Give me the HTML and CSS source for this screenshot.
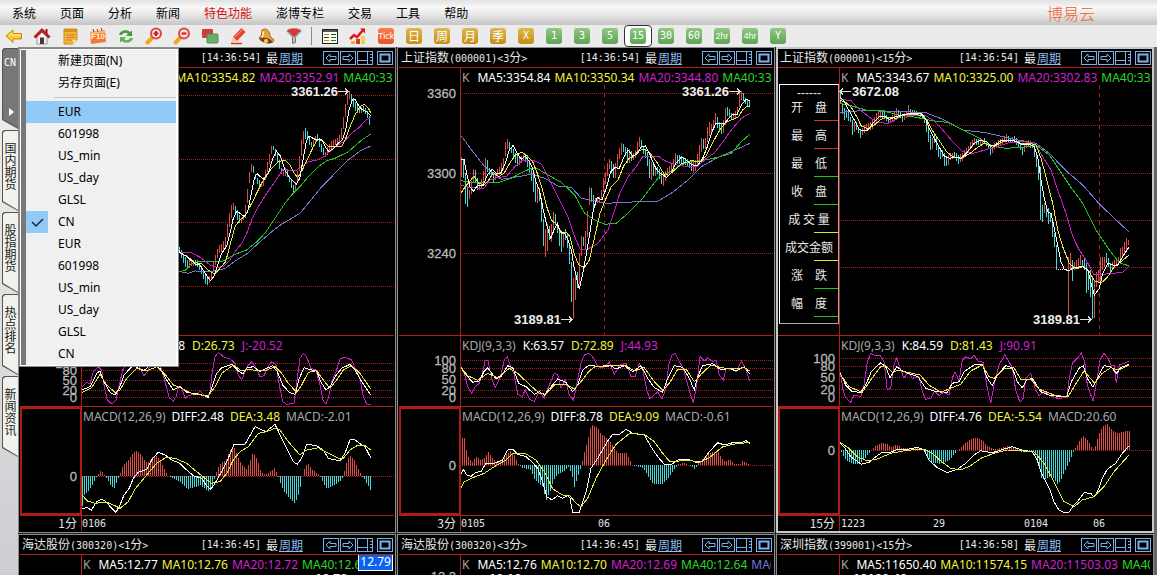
FILE: index.html
```
<!DOCTYPE html>
<html lang="zh-CN">
<head>
  <meta charset="UTF-8">
  <title>博易云</title>
  <link rel="stylesheet" href="styles.css">
</head>
<body>
  <nav class="menubar">
    <a href="#">系统</a>
    <a href="#">页面</a>
    <a href="#">分析</a>
    <a href="#">新闻</a>
    <a href="#" class="hot">特色功能</a>
    <a href="#">澎博专栏</a>
    <a href="#">交易</a>
    <a href="#">工具</a>
    <a href="#">帮助</a>
    <span class="brand">博易云</span>
  </nav>

  <div class="toolbar">
    <button aria-label="后退"><svg width="18" height="18" viewBox="0 0 18 18"><path d="M1 9l7-6v3.500h8.500v5.500h-8.500v3.500z" fill="#ffc832" stroke="#c98a12"/><path d="M4 9l3-3v2h8" fill="none" stroke="#fff0a0"/></svg></button>
    <button aria-label="首页"><svg width="18" height="18" viewBox="0 0 18 18"><path d="M4 9v8h10v-8l-5-5z" fill="#f2f2f2" stroke="#999"/><path d="M12.500 2h2v5h-2z" fill="#7a1a1a"/><path d="M0.500 9.500l8.500-8.500 8.500 8.500-2 2-6.500-6-6.500 6z" fill="#b52027"/><path d="M7 10.500h4v6.500h-4z" fill="#5a3030"/></svg></button>
    <button aria-label="记事"><svg width="18" height="18" viewBox="0 0 18 18"><path d="M3 2h13v11l-4 4h-9z" fill="#f0b444" stroke="#d08c20"/><path d="M3 2h13v3h-13z" fill="#d8921c"/><path d="M5 8h9M5 10.500h9M5 13h6" stroke="#c98520"/><path d="M12 17v-4h4z" fill="#ffe0a0"/></svg></button>
    <button class="f10" aria-label="F10"><svg width="18" height="18" viewBox="0 0 18 18"><path d="M1 5l15-2 1 12-15 2z" fill="#f37a34"/><path d="M1 5l15-2 0 3-15 2z" fill="#f9b26c"/><path d="M4 2l1 3M8 2l1 3M12 1l1 3" stroke="#8a4a2a"/></svg><span>F10</span></button>
    <button aria-label="刷新"><svg width="18" height="18" viewBox="0 0 18 18"><path d="M2 8c1-5 8-6 11-3l2-1.500v5.500h-6l2-2c-2-2-5-1.500-6 1z" fill="#4a9a3c"/><path d="M16 11c-1 5-8 6-11 3l-2 1.500v-5.500h6l-2 2c2 2 5 1.500 6-1z" fill="#5fb04e"/></svg></button>
    <button aria-label="放大"><svg width="18" height="18" viewBox="0 0 18 18"><path d="M2.500 15.500l4.500-4.500" stroke="#f0a81c" stroke-width="4" stroke-linecap="round"/><circle cx="11" cy="6.500" r="5" fill="#fbdede" stroke="#e04844" stroke-width="2"/><path d="M8.500 6.500h5M11 4v5" stroke="#c81818" stroke-width="2"/></svg></button>
    <button aria-label="缩小"><svg width="18" height="18" viewBox="0 0 18 18"><path d="M2.500 15.500l4.500-4.500" stroke="#f0a81c" stroke-width="4" stroke-linecap="round"/><circle cx="11" cy="6.500" r="5" fill="#fbdede" stroke="#e04844" stroke-width="2"/><path d="M8.500 6.500h5" stroke="#c81818" stroke-width="2"/></svg></button>
    <button aria-label="叠加"><svg width="18" height="18" viewBox="0 0 18 18"><rect x="1" y="2" width="11" height="9" rx="1" fill="#d43c3c"/><rect x="6" y="7" width="11" height="9" rx="1" fill="#6cae68" stroke="#4f8f50"/></svg></button>
    <button aria-label="画线"><svg width="18" height="18" viewBox="0 0 18 18"><path d="M4 10l8.500-9 4 4-8.500 9z" fill="#e8402c"/><path d="M6 10.500l8-8.500" stroke="#ff9a80"/><path d="M4 10l4 4-6 1.500z" fill="#f6c890"/><path d="M2 16.500h11" stroke="#e0301c" stroke-width="1.500"/></svg></button>
    <button aria-label="预警"><svg width="18" height="18" viewBox="0 0 18 18"><path d="M5 3c5-3 8 2 8 6l4 4-1.500 2.500-13-3.500c-1-2 1-2 2-4z" fill="#e6a23c" stroke="#a8641c"/><ellipse cx="9" cy="13.500" rx="6.500" ry="2.500" transform="rotate(15 9 13.500)" fill="#7a4418"/><circle cx="9" cy="14" r="2" fill="#ffd060"/><path d="M6 4.500c1 2 0 4-1 6" stroke="#fff0b0" fill="none" stroke-width="1.500"/></svg></button>
    <button aria-label="筛选"><svg width="18" height="18" viewBox="0 0 18 18"><path d="M2 4l5.500 6v6.500l3-1v-5.500l5.500-6z" fill="#b8bcc0" stroke="#777"/><ellipse cx="9" cy="4" rx="7" ry="2.500" fill="#e83030" stroke="#999"/><path d="M5 6l4 4 4-4z" fill="#d83030"/></svg></button>
    <i class="sep"></i>
    <button aria-label="报价表"><svg width="18" height="18" viewBox="0 0 18 18"><rect x="1.500" y="2.500" width="15" height="14" fill="#fffff0" stroke="#222"/><path d="M2 4h14" stroke="#555" stroke-width="2"/><path d="M3 7.500h5M3 13.500h5" stroke="#b08820"/><path d="M10 7.500h5M3 10.500h5" stroke="#333"/><path d="M10 10.500h5M10 13.500h5" stroke="#287828"/></svg></button>
    <button aria-label="走势"><svg width="18" height="18" viewBox="0 0 18 18"><path d="M1 12l4-4 3 2 7-8" stroke="#e01820" stroke-width="2.500" fill="none"/><path d="M11 1.500h5v5z" fill="#e01820"/><path d="M2 14h4v3h-4z" fill="#e8b030"/><path d="M7 12h4v5h-4z" fill="#d04020"/><path d="M12 9h4v8h-4z" fill="#f0d050"/></svg></button>
    <button><b class="badge tick">Tick</b></button>
    <button><b class="badge day">日</b></button>
    <button><b class="badge day">周</b></button>
    <button><b class="badge day">月</b></button>
    <button><b class="badge day">季</b></button>
    <button><b class="badge day num">X</b></button>
    <button><b class="badge num">1</b></button>
    <button><b class="badge num">3</b></button>
    <button><b class="badge num">5</b></button>
    <button class="on"><b class="badge num">15</b></button>
    <button><b class="badge num">30</b></button>
    <button><b class="badge num">60</b></button>
    <button><b class="badge hr">2hr</b></button>
    <button><b class="badge hr">4hr</b></button>
    <button><b class="badge num">Y</b></button>
  </div>

  <div class="main">
    <div class="tabs">
      <button class="tab active"><b>CN</b><i></i></button>
      <button class="tab"><span>国内期货</span></button>
      <button class="tab"><span>股指期货</span></button>
      <button class="tab"><span>热点排名</span></button>
      <button class="tab"><span>新闻资讯</span></button>
    </div>

    <div class="board">
      <section class="panel">
        <header class="title">
          <span class="time">[14:36:54]</span><b>最</b><a href="#">周期</a>
          <div class="tools"></div>
        </header>
        <div class="pane price">
          <div class="legend"><span class="gray">K</span><span class="k">MA5:3355.42</span><span class="y">MA10:3354.82</span><span class="m">MA20:3352.91</span><span class="g">MA40:3346.15</span></div>
          <svg data-chart="p1"></svg>
        </div>
        <div class="pane kdj">
          <div class="legend"><span class="gray">KDJ(9,3,3)</span><span class="w">K:10.98</span><span class="y">D:26.73</span><span class="m">J:-20.52</span></div>
          <svg data-chart="k1"></svg>
        </div>
        <div class="pane macd">
          <div class="legend"><span class="gray">MACD(12,26,9)</span><span class="w">DIFF:2.48</span><span class="y">DEA:3.48</span><span class="gray">MACD:-2.01</span></div>
          <svg data-chart="m1"></svg>
        </div>
        <div class="pane dates"><svg data-chart="t1"></svg></div>
      </section>

      <section class="panel">
        <header class="title">
          <span class="name"><b>上证指数</b>(000001)&lt;3<b>分</b>&gt;</span>
          <span class="time">[14:36:54]</span><b>最</b><a href="#">周期</a>
          <div class="tools"></div>
        </header>
        <div class="pane price">
          <div class="legend"><span class="gray">K</span><span class="k">MA5:3354.84</span><span class="y">MA10:3350.34</span><span class="m">MA20:3344.80</span><span class="g">MA40:3334.12</span></div>
          <svg data-chart="p2"></svg>
        </div>
        <div class="pane kdj">
          <div class="legend"><span class="gray">KDJ(9,3,3)</span><span class="w">K:63.57</span><span class="y">D:72.89</span><span class="m">J:44.93</span></div>
          <svg data-chart="k2"></svg>
        </div>
        <div class="pane macd">
          <div class="legend"><span class="gray">MACD(12,26,9)</span><span class="w">DIFF:8.78</span><span class="y">DEA:9.09</span><span class="gray">MACD:-0.61</span></div>
          <svg data-chart="m2"></svg>
        </div>
        <div class="pane dates"><svg data-chart="t2"></svg></div>
      </section>

      <section class="panel selected">
        <header class="title">
          <span class="name"><b>上证指数</b>(000001)&lt;15<b>分</b>&gt;</span>
          <span class="time">[14:36:54]</span><b>最</b><a href="#">周期</a>
          <div class="tools"></div>
        </header>
        <div class="pane price">
          <div class="legend"><span class="gray">K</span><span class="k">MA5:3343.67</span><span class="y">MA10:3325.00</span><span class="m">MA20:3302.83</span><span class="g">MA40:3306.41</span></div>
          <svg data-chart="p3"></svg>
          <div class="quote">
            <p class="dash">------</p>
            <p class="up">开　盘</p>
            <p class="up">最　高</p>
            <p class="down">最　低</p>
            <p class="down">收　盘</p>
            <p class="vol">成 交 量</p>
            <p class="vol">成交金额</p>
            <p class="down">涨　跌</p>
            <p class="down">幅　度</p>
          </div>
        </div>
        <div class="pane kdj">
          <div class="legend"><span class="gray">KDJ(9,3,3)</span><span class="w">K:84.59</span><span class="y">D:81.43</span><span class="m">J:90.91</span></div>
          <svg data-chart="k3"></svg>
        </div>
        <div class="pane macd">
          <div class="legend"><span class="gray">MACD(12,26,9)</span><span class="w">DIFF:4.76</span><span class="y">DEA:-5.54</span><span class="gray">MACD:20.60</span></div>
          <svg data-chart="m3"></svg>
        </div>
        <div class="pane dates"><svg data-chart="t3"></svg></div>
      </section>

      <section class="panel">
        <header class="title">
          <span class="name"><b>海达股份</b>(300320)&lt;1<b>分</b>&gt;</span>
          <span class="time">[14:36:45]</span><b>最</b><a href="#">周期</a>
          <div class="tools"></div>
        </header>
        <div class="pane price">
          <div class="legend"><span class="gray">K</span><span class="k">MA5:12.77</span><span class="y">MA10:12.76</span><span class="m">MA20:12.72</span><span class="g">MA40:12.68</span></div>
          <svg data-chart="b1"></svg>
          <span class="last">12.79</span>
        </div>
      </section>

      <section class="panel">
        <header class="title">
          <span class="name"><b>海达股份</b>(300320)&lt;3<b>分</b>&gt;</span>
          <span class="time">[14:36:45]</span><b>最</b><a href="#">周期</a>
          <div class="tools"></div>
        </header>
        <div class="pane price">
          <div class="legend"><span class="gray">K</span><span class="k">MA5:12.76</span><span class="y">MA10:12.70</span><span class="m">MA20:12.69</span><span class="g">MA40:12.64</span><span class="b">MA60:12.61</span></div>
          <svg data-chart="b2"></svg>
        </div>
      </section>

      <section class="panel">
        <header class="title">
          <span class="name"><b>深圳指数</b>(399001)&lt;15<b>分</b>&gt;</span>
          <span class="time">[14:36:58]</span><b>最</b><a href="#">周期</a>
          <div class="tools"></div>
        </header>
        <div class="pane price">
          <div class="legend"><span class="gray">K</span><span class="k">MA5:11650.40</span><span class="y">MA10:11574.15</span><span class="m">MA20:11503.03</span><span class="g">MA40:11498.20</span></div>
          <svg data-chart="b3"></svg>
        </div>
      </section>
    </div>

    <div class="popup">
      <button>新建页面(N)</button>
      <button>另存页面(E)</button>
      <hr>
      <button class="hover">EUR</button>
      <button>601998</button>
      <button>US_min</button>
      <button>US_day</button>
      <button>GLSL</button>
      <button class="checked"><svg width="22" height="22" viewBox="0 0 22 22"><path d="M6 11l4 4 7-7" fill="none" stroke="#223" stroke-width="1.500"/></svg>CN</button>
      <button>EUR</button>
      <button>601998</button>
      <button>US_min</button>
      <button>US_day</button>
      <button>GLSL</button>
      <button>CN</button>
    </div>
  </div>

  <script src="charts.js"></script>
</body>
</html>
```
FILE: styles.css
```
* {
  box-sizing: border-box;
}

body {
  margin: 0;
  height: 100vh;
  overflow: hidden;
  display: flex;
  flex-direction: column;
  background: #ebebeb;
  font-family: 'Noto Sans CJK SC', sans-serif;
  font-size: 12px;
}

button {
  border: none;
  padding: 0;
  margin: 0;
  background: none;
  font: inherit;
  color: inherit;
}

/* menu bar */
.menubar {
  flex: none;
  height: 25px;
  display: flex;
  align-items: center;
  gap: 24px;
  padding: 0 62px 0 12px;
  background: linear-gradient(#e2e2e2, #f8f8f8 30%, #e6e6e6 60%, #c6c4c4);
}

.menubar a {
  color: #000;
  text-decoration: none;
}

.menubar .hot {
  color: #d01010;
}

.brand {
  margin-left: auto;
  font-size: 16px;
  font-weight: 300;
  color: #f0602c;
}

/* toolbar */
.toolbar {
  flex: none;
  height: 22px;
  display: flex;
  background: #ebebeb;
}

.toolbar button {
  position: relative;
  width: 28px;
  height: 22px;
  display: flex;
  align-items: center;
  justify-content: center;
}

.toolbar .sep {
  width: 1px;
  height: 18px;
  margin: 2px 4px 2px 3px;
  background: #888;
}

.toolbar .on {
  border: 1px solid #333;
  border-radius: 4px;
  background: #fff;
}

.f10 span {
  position: absolute;
  left: 0;
  right: 0;
  top: 7px;
  font: bold 8px/10px 'Liberation Sans', sans-serif;
  color: #fff4d0;
}

.badge {
  width: 16px;
  height: 16px;
  border-radius: 3px;
  background: linear-gradient(#90c884, #5fa352);
  color: #fff;
  font-weight: normal;
  line-height: 16px;
  text-align: center;
  white-space: nowrap;
}

.badge.day {
  background: linear-gradient(#e0b850, #c48c14);
}

.badge.num {
  font-family: 'DejaVu Sans Mono', monospace;
  font-size: 10px;
}

.badge.hr {
  font-family: 'Liberation Sans', sans-serif;
  font-size: 9px;
}

.badge.tick {
  background: linear-gradient(#f88050, #e85020);
  font-family: 'Liberation Sans', sans-serif;
  font-size: 9px;
}

/* page tabs */
.main {
  position: relative;
  flex: 1;
  display: flex;
  min-height: 0;
}

.tabs {
  flex: none;
  width: 18px;
  padding: 1px 0 0 2px;
  background: linear-gradient(#efefef, #dcdcde 60%, #cdcdd2);
}

.tab {
  position: relative;
  display: block;
  width: 16px;
  height: 81px;
  margin-bottom: 1px;
  background: #555;
  clip-path: polygon(0 2px, 2px 0, 100% 0, 100% 100%, 0 calc(100% - 9px));
  line-height: 15px;
}

.tab::before {
  content: '';
  position: absolute;
  inset: 1px 0 1px 1px;
  background: #f2f1ec;
  clip-path: polygon(0 2px, 2px 0, 100% 0, 100% 100%, 0 calc(100% - 9px));
}

.tab.active::before {
  background: #777;
}

.tab span {
  position: absolute;
  top: 12px;
  left: 1px;
  writing-mode: vertical-rl;
  color: #222;
}

.tab b {
  position: absolute;
  top: 7px;
  left: 2px;
  color: #fff;
  font: 10px/15px 'DejaVu Sans Mono', monospace;
}

.tab i {
  position: absolute;
  left: 7px;
  top: 60px;
  border: 4px solid transparent;
  border-left: 5px solid #fff;
  border-right: none;
}

/* chart windows */
.board {
  flex: 1;
  min-width: 0;
  overflow: hidden;
  display: grid;
  grid-template-columns: repeat(3, minmax(0, 1fr));
  grid-auto-rows: max-content;
  align-content: start;
  gap: 1px;
  background: #222;
  border-right: 3px solid #666;
}

.panel {
  border: 1px solid #8c8c8c;
  padding: 1px;
  background: #000;
  overflow: hidden;
}

.panel.selected {
  border: 2px solid #c8c8c8;
  padding: 0;
}

.title {
  display: flex;
  align-items: center;
  justify-content: flex-end;
  height: 19px;
  padding: 0 1px 0 2px;
  border-bottom: 1px solid #b02019;
  color: #e8e8e8;
  font-family: 'DejaVu Sans Mono', monospace;
  font-size: 10px;
  line-height: 18px;
  white-space: nowrap;
}

.title b,
.title a {
  font-family: 'Noto Sans CJK SC', sans-serif;
  font-size: 12px;
  font-weight: normal;
}

.title .name {
  margin-right: auto;
}

.title .time {
  margin-right: 5px;
}

.title a {
  margin: 0 20px 0 1px;
  color: #8cbcf4;
}

.tools {
  display: flex;
  gap: 1px;
}

.tools button {
  height: 14px;
}

.tools button:last-child {
  margin-left: 3px;
}

.tools svg {
  display: block;
}

.pane {
  position: relative;
  overflow: hidden;
  border-bottom: 1px solid #b02019;
}

.pane svg {
  display: block;
  width: 100%;
  height: 100%;
}

.price {
  height: 268px;
}

.kdj {
  height: 71px;
}

.macd {
  height: 109px;
}

.dates {
  height: 15px;
  border-bottom: none;
}

.legend {
  position: absolute;
  top: 2px;
  left: 63px;
  right: 2px;
  display: flex;
  gap: 4px;
  overflow: hidden;
  font-family: 'Noto Sans', sans-serif;
  font-size: 12px;
  line-height: 15px;
  white-space: nowrap;
}

.legend .k {
  margin-left: 4px;
  color: #fff;
}

.kdj .legend {
  gap: 7px;
}

.macd .legend {
  gap: 6px;
}

.gray { color: #a8a8a8; }
.w { color: #fff; }
.y { color: #f4f43c; }
.m { color: #d020d0; }
.g { color: #28d828; }
.b { color: #7878d8; }

.quote {
  position: absolute;
  top: 16px;
  left: 1px;
  width: 60px;
  height: 240px;
  border: 1px solid #aaa;
  border-top-color: #fff;
  border-left-color: #fff;
  background: #000;
  color: #e8e8e8;
  text-align: center;
  overflow: hidden;
}

.quote p {
  position: relative;
  height: 28px;
  margin: 0;
  line-height: 16px;
  white-space: nowrap;
}

.quote .dash {
  height: 14px;
  font-family: 'Liberation Sans', sans-serif;
  font-size: 12px;
}

.quote p::after {
  content: '';
  position: absolute;
  right: 0;
  top: 21px;
  width: 24px;
  border-top: 1px solid;
}

.quote .dash::after { display: none; }
.quote .up::after { color: #d83030; }
.quote .down::after { color: #20c820; }
.quote .vol::after { color: #e0e020; }

.last {
  position: absolute;
  right: 1px;
  top: -2px;
  padding: 0 1px;
  border: 1px solid #fff;
  background: #0a62f0;
  color: #fff;
  font-family: 'Noto Sans', sans-serif;
  font-size: 12px;
  line-height: 16px;
}

/* chart drawing */
.pane line,
.pane path,
.pane rect {
  fill: none;
  stroke-width: 1;
  shape-rendering: crispEdges;
}

.axis { stroke: #b02019; }
.grid { stroke: #b01c1c; stroke-dasharray: 1 1; }
.day-line { stroke: #b02019; stroke-dasharray: 4 4; }
.pane .focus { stroke: #b01c14; stroke-width: 2; }
.rise { stroke: #e04c44; }
.fall { stroke: #40dcdc; }
.ma5 { stroke: #fff; }
.ma10 { stroke: #e8e838; }
.ma20 { stroke: #c81ec8; }
.ma40 { stroke: #20c420; }
.ma60 { stroke: #7078d0; }
.pointer { stroke: #ddd; }

.pane text {
  font-family: 'Liberation Sans', sans-serif;
  font-size: 13px;
}

.scale { fill: #b8b8b8; stroke: #b8b8b8; stroke-width: 0.3px; text-anchor: end; }
.mark { fill: #eee; font-weight: bold; }

.pane .date {
  fill: #e4e4e4;
  font-family: 'DejaVu Sans Mono', 'Noto Sans CJK SC', monospace;
  font-size: 10px;
}

.pane .unit {
  fill: #e4e4e4;
  font-family: 'Noto Sans CJK SC', sans-serif;
  font-size: 12px;
  text-anchor: end;
}

/* page menu */
.popup {
  position: absolute;
  left: 19px;
  top: 1px;
  width: 160px;
  display: flex;
  flex-direction: column;
  padding-left: 5px;
  border: 2px solid #fff;
  border-right-width: 3px;
  outline: 1px solid #888;
  outline-offset: -1px;
  background: linear-gradient(90deg, #787878 5px, #f0f0f0 5px);
  font-family: 'Noto Sans', 'Noto Sans CJK SC', sans-serif;
}

.popup button {
  position: relative;
  height: 22px;
  padding-left: 32px;
  line-height: 22px;
  text-align: left;
  color: #000;
}

.popup .hover {
  background: #91c9f7;
}

.popup .checked svg {
  position: absolute;
  left: 0;
  top: 0;
  background: #91c9f7;
}

.popup hr {
  width: 122px;
  height: 1px;
  margin: 3px 0 3px auto;
  border: none;
  background: #c8c8c8;
}
```
FILE: charts.js
```
// Points are stored as "x,y x,y ..." in thirds of a pixel, dx/dy move them into the pane.
const charts = {
  p1: {
    type: 'price', dx: 155, dy: 2,
    grid: [27, 91, 154, 218],
    candles: '12,530,548 22,548,575 30,562,590 38,572,596 48,570,588 58,570,588 66,570,590 76,585,605 84,600,628 92,618,645 98,628,644 108,605,630 116,568,598 124,540,570 132,525,548 140,522,545 150,500,535 158,450,490 166,408,450 174,400,420 182,410,440 190,430,460 198,445,460 204,435,450 212,393,440 218,340,380 224,290,320 230,280,300 236,292,315 242,320,335 250,330,350 258,335,352 266,318,345 272,290,322 280,260,292 286,232,262 292,222,236 298,236,252 306,245,275 314,280,304 320,300,318 328,298,318 334,290,315 342,318,335 350,335,360 356,350,370 362,328,360 368,290,325 374,240,290 380,195,240 388,172,205 396,182,208 404,208,230 410,218,232 418,200,222 426,193,212 432,205,232 440,228,250 450,245,262 458,228,252 466,215,240 476,210,225 486,205,228 494,192,215 500,165,205 506,130,165 512,90,130 518,62,92 524,62,84 532,80,108 540,95,122 548,108,130 556,110,130 564,108,125 572,115,135 578,125,150 584,145,172',
    lines: {
      ma60: '12,604 40,610 60,603 110,604 150,596 185,570 215,552 250,520 290,485 320,462 345,448 375,430 400,400 440,350 480,310 520,270 560,240 587,228',
      ma40: '12,604 30,602 50,580 70,575 100,573 145,573 180,553 215,540 245,515 270,490 300,445 330,400 350,375 375,350 400,320 430,290 455,272 480,265 520,245 560,210 587,192',
      ma20: '12,547 48,547 80,565 105,585 125,592 145,590 165,570 180,545 200,520 215,490 230,450 250,410 275,370 300,335 325,297 340,300 365,300 380,290 400,275 425,270 450,258 480,230 510,212 530,190 555,170 570,152 587,143',
      ma10: '12,548 35,558 60,578 80,582 100,600 118,612 135,595 152,575 165,525 180,470 195,450 210,438 230,400 250,360 270,320 290,295 310,275 330,270 345,285 358,310 368,323 382,300 400,262 415,230 428,208 445,214 460,228 480,231 500,230 512,205 525,170 540,135 555,110 568,103 580,115 587,128',
      ma5: '12,545 38,562 60,582 75,585 92,612 106,632 116,620 130,580 140,550 155,528 165,490 175,445 186,424 195,430 208,440 218,425 228,375 238,325 246,311 256,320 268,328 280,310 292,270 304,243 316,258 330,300 345,325 364,342 374,325 384,270 394,215 402,198 420,208 440,208 452,232 462,245 476,235 490,220 502,210 512,180 522,120 532,90 540,88 550,105 560,118 575,125 587,138'
    },
    marks: [['3361.26', 348, 62, 490, 520]]
  },
  p2: {
    type: 'price', dx: -1, dy: 2,
    grid: [25, 105, 185],
    scale: [['3360', 25], ['3300', 105], ['3240', 185]],
    day: 205,
    candles: '190,260,320 194,258,290 200,290,395 206,350,420 212,365,390 218,350,385 224,300,345 230,290,330 236,320,360 244,335,360 254,320,350 260,265,345 266,260,300 272,290,315 280,300,320 288,315,342 296,300,320 304,290,315 310,280,312 316,265,300 320,222,270 326,204,238 332,210,235 340,230,250 348,240,270 356,255,290 364,260,285 372,258,275 380,252,272 388,255,290 394,270,310 402,300,340 410,330,390 416,350,412 422,345,375 428,370,430 434,430,510 440,485,560 446,462,560 452,462,505 458,480,522 464,428,500 470,425,460 476,450,475 482,470,520 488,485,548 494,490,545 500,475,500 506,480,530 512,510,545 518,540,660 523,630,748 529,620,740 535,600,640 541,610,665 546,510,625 552,490,525 558,505,530 564,470,540 570,400,480 574,350,405 578,348,385 584,370,415 590,385,410 598,380,400 606,380,400 612,350,380 618,310,360 624,305,335 630,265,310 636,268,290 642,275,320 650,290,330 656,260,310 662,240,270 668,220,262 674,218,245 680,230,250 690,235,285 698,240,275 706,250,270 714,235,260 720,208,245 726,198,225 732,215,240 738,235,260 746,240,270 752,260,320 758,280,335 764,270,318 770,290,318 778,290,312 786,300,330 794,310,352 800,305,338 808,295,320 816,285,312 824,272,300 832,250,285 840,255,280 850,258,285 860,262,285 870,270,290 878,275,300 886,275,310 894,270,300 902,235,280 908,205,250 914,203,235 920,215,245 926,180,222 932,152,200 938,165,190 944,158,180 952,130,165 958,140,175 966,160,190 974,165,192 980,118,180 986,108,135 994,118,145 1002,132,150 1010,126,148 1018,110,135 1024,70,112 1030,62,90 1036,70,92 1042,84,102 1048,88,108 1054,90,108',
    lines: {
      ma60: '190,198 225,245 260,290 310,328 350,322 400,313 440,325 480,348 520,352 550,385 590,393 625,400 680,397 780,393 820,370 870,330 910,290 960,262 1000,245 1056,220',
      ma40: '190,332 225,338 300,338 340,325 370,308 400,295 420,297 450,315 490,337 530,375 560,430 590,450 620,463 655,460 690,430 730,390 760,350 785,318 810,308 840,290 870,275 910,272 960,262 1000,250 1030,215 1056,192',
      ma20: '190,345 215,353 258,355 275,330 300,322 325,320 350,290 372,272 405,271 430,282 450,320 480,380 510,440 530,500 546,538 568,538 600,520 630,480 650,420 665,370 690,320 715,290 735,258 760,258 780,258 800,272 830,284 870,290 900,288 925,265 950,248 975,215 1000,180 1030,145 1056,130',
      ma10: '190,368 205,345 215,335 228,318 242,340 258,345 272,330 286,308 302,320 318,310 335,280 352,255 372,246 388,258 404,275 418,310 432,355 446,410 460,450 474,462 490,490 506,488 516,500 528,550 542,585 560,592 574,570 590,500 606,430 622,390 640,350 660,330 676,290 692,266 706,260 722,242 736,238 750,242 766,262 780,282 798,312 812,316 830,300 850,282 880,272 910,275 926,255 944,218 962,185 982,158 1000,150 1020,142 1034,120 1045,110 1056,110',
      ma5: '190,268 198,268 206,310 216,350 226,364 240,345 255,348 268,315 282,298 295,310 308,310 322,280 334,240 346,226 358,250 370,268 382,258 394,275 404,295 414,335 424,360 436,420 446,465 458,505 468,480 478,462 488,485 500,490 512,515 520,540 528,590 536,625 544,658 552,620 562,570 574,500 586,420 598,382 612,390 626,350 638,305 650,293 664,295 678,260 690,240 704,258 718,252 730,230 742,228 754,250 764,275 776,300 790,312 806,322 820,308 834,280 850,262 862,268 874,278 886,286 900,285 914,265 928,230 942,185 954,160 968,162 980,160 992,145 1006,132 1018,132 1030,105 1044,88 1056,92'
    },
    marks: [['3361.26', 852, 62, 992, 1027], ['3189.81', 348, 748, 490, 522]]
  },
  p3: {
    type: 'price', dx: -2, dy: 2,
    grid: [57, 105, 152, 199],
    day: 321,
    gap: [845, 869],
    candles: '191,60,100 197,100,132 203,115,150 209,120,145 215,125,152 221,140,155 227,150,195 233,155,185 239,155,180 245,170,190 251,178,205 257,175,195 263,165,188 275,160,180 287,150,178 299,130,155 311,122,145 323,125,145 335,145,160 347,135,155 359,115,145 371,125,145 377,135,155 389,125,145 395,105,128 401,118,135 413,120,135 425,125,135 437,132,148 443,135,160 449,155,185 455,175,215 461,195,240 467,205,238 473,195,220 479,205,240 485,225,262 491,235,268 497,240,262 503,250,287 509,258,288 515,255,285 521,250,270 533,245,265 545,255,282 557,250,272 563,240,262 575,228,250 581,215,235 593,205,225 605,208,225 617,210,222 623,205,220 635,220,235 641,232,255 647,235,250 653,220,238 665,210,232 677,205,222 689,192,212 701,205,220 713,198,210 719,205,225 731,222,240 737,230,255 749,222,235 755,210,230 767,215,235 773,235,260 779,250,292 785,280,330 791,290,450 797,405,455 803,400,428 809,405,440 815,415,462 821,430,455 827,450,500 833,490,530 839,525,600 869,600,745 875,560,745 881,550,600 887,570,632 893,575,600 905,565,595 911,555,585 917,570,590 923,560,600 929,580,668 935,600,660 941,600,680 947,620,748 953,630,745 959,605,650 965,600,640 971,562,640 977,560,600 983,560,590 989,550,580 995,565,590 1001,580,605 1013,570,595 1025,560,580 1031,535,575 1037,530,560 1043,515,550 1049,505,540 1055,510,525',
    lines: {
      ma60: '191,127 270,121 380,125 450,128 500,148 560,180 630,188 700,205 780,220 820,250 870,302 920,345 970,402 1010,440 1058,485',
      ma40: '191,100 225,107 270,120 330,125 370,135 420,142 470,152 520,158 560,180 610,205 650,228 690,235 740,232 780,225 820,255 850,300 880,345 920,400 960,480 1000,540 1030,578 1058,587',
      ma20: '191,87 225,92 255,122 285,145 310,158 335,160 355,152 380,135 445,135 470,150 500,180 530,215 560,245 590,250 620,242 660,230 700,218 740,215 775,218 800,260 825,300 845,360 870,430 890,500 910,540 930,570 955,615 990,612 1040,607 1058,588',
      ma10: '191,90 210,98 225,110 242,140 256,168 275,176 295,165 315,148 335,142 360,145 375,138 400,132 435,136 452,150 468,180 490,212 512,245 530,260 555,265 580,252 605,232 625,220 650,232 680,215 710,210 735,220 760,220 780,225 795,265 810,320 830,400 845,480 860,530 880,580 900,597 920,590 940,605 955,632 975,640 995,620 1015,590 1035,575 1058,556',
      ma5: '191,80 205,95 218,120 235,150 250,178 262,182 275,180 295,155 310,140 325,138 340,148 360,140 385,133 410,130 435,130 448,145 460,175 475,205 490,232 505,258 520,265 540,262 555,265 575,245 595,220 612,212 630,214 645,228 658,225 675,212 700,210 720,214 740,225 760,222 775,230 785,260 795,330 805,385 815,425 825,430 835,475 845,525 855,575 865,598 878,602 890,595 905,592 920,588 935,600 945,640 955,675 970,655 980,610 995,580 1010,585 1025,585 1040,560 1058,532'
    },
    marks: [['3672.08', 229, 62, 225, 192], ['3189.81', 772, 748, 912, 945]]
  },
  k1: {
    type: 'kdj', dx: -20, dy: -1,
    scale: [['100', 27], ['80', 34], ['50', 44], ['20', 54], ['0', 61]],
    lines: {
      ma20: '246,155 260,142 270,146 280,110 295,95 305,105 312,150 322,195 335,207 348,195 358,150 368,105 380,85 400,70 420,100 432,122 445,105 460,70 480,90 495,140 508,188 520,198 528,185 536,155 545,160 555,190 565,182 580,178 590,180 600,168 612,180 622,188 630,170 637,110 645,65 655,52 670,65 690,72 705,85 715,120 725,135 735,110 745,90 755,80 768,98 780,125 792,122 804,95 815,80 828,90 838,150 848,200 860,208 882,205 892,130 900,70 910,55 920,65 932,100 948,105 960,150 970,200 978,206 985,190 995,140 1008,110 1020,72 1035,66 1055,75 1065,100 1080,130 1090,185 1100,207 1112,208',
      ma5: '246,165 270,155 290,115 300,108 312,140 330,172 345,180 358,160 372,120 400,90 430,108 455,88 480,100 500,135 520,165 540,155 560,172 600,178 625,187 638,150 650,115 665,98 695,88 712,105 728,117 742,98 760,95 780,110 800,100 818,92 832,110 848,150 868,172 885,178 898,130 912,98 935,105 950,108 962,140 978,165 990,155 1005,125 1025,100 1050,88 1065,105 1085,140 1112,180',
      ma10: '246,172 275,158 300,118 320,150 345,172 360,165 380,130 410,100 440,108 470,95 495,118 520,150 545,160 580,178 625,182 645,155 665,115 700,90 725,108 745,102 775,108 800,105 825,95 845,115 865,145 890,172 905,150 925,112 950,107 970,135 990,160 1010,135 1030,105 1055,92 1080,115 1112,162'
    }
  },
  k2: {
    type: 'kdj', dx: -3, dy: -1,
    scale: [['100', 24], ['80', 32], ['50', 43], ['20', 54], ['0', 61]],
    lines: {
      ma20: '195,95 205,115 215,155 227,175 237,155 250,145 258,120 268,75 276,78 288,135 298,157 312,130 325,75 334,66 344,95 355,120 365,178 378,185 388,165 400,192 415,200 430,168 445,190 458,155 475,115 485,120 495,160 508,135 520,180 532,196 542,150 555,85 565,60 580,55 592,68 605,95 620,98 640,82 655,118 672,90 690,85 705,125 718,125 730,85 742,110 752,165 762,192 785,170 798,192 810,160 818,90 828,60 838,55 850,80 862,100 875,150 892,205 902,150 912,65 925,78 935,68 950,80 960,75 970,120 982,135 990,100 1010,105 1022,110 1036,78 1048,100 1061,138',
      ma5: '195,98 210,120 230,142 250,138 265,108 275,98 300,132 315,125 335,92 350,98 368,145 390,155 415,178 430,170 445,180 465,155 485,132 510,142 530,170 545,150 560,105 580,90 610,95 640,90 660,102 685,92 710,110 735,92 755,130 775,158 800,172 815,130 835,92 860,97 880,130 895,165 905,125 920,92 950,86 975,105 1000,100 1020,108 1045,95 1061,118',
      ma10: '195,97 215,122 245,136 275,115 305,128 340,100 365,115 400,148 430,175 450,178 475,150 510,148 535,162 555,140 580,108 600,93 640,93 690,92 715,108 745,98 775,140 800,166 820,145 845,103 870,102 895,140 915,118 945,90 975,98 1010,102 1045,98 1061,108'
    }
  },
  k3: {
    type: 'kdj', dx: -4, dy: -1,
    scale: [['100', 22], ['80', 30], ['50', 41], ['20', 53], ['0', 61]],
    lines: {
      ma20: '199,110 207,165 215,188 230,202 240,180 260,185 270,150 280,80 290,55 305,62 318,60 330,80 340,165 350,160 360,90 368,68 378,100 390,130 402,110 415,130 435,125 445,170 455,193 470,190 482,168 495,182 508,172 525,180 535,130 543,110 555,138 565,75 575,65 590,72 600,60 612,78 628,82 638,150 650,205 662,140 675,90 692,60 705,80 715,98 725,165 738,202 748,190 755,130 770,115 785,165 795,182 810,170 825,180 850,190 878,188 886,130 895,85 910,70 922,55 932,80 940,150 957,198 968,140 978,75 990,55 1002,70 1012,92 1020,90 1027,145 1036,90 1050,85 1065,78',
      ma5: '199,115 215,150 235,170 260,172 275,150 292,110 320,83 335,95 348,128 368,95 385,108 410,118 432,125 455,160 480,168 520,172 535,145 555,140 570,110 600,90 625,88 640,130 655,152 670,120 695,92 715,98 730,140 745,158 758,135 775,130 800,170 830,182 878,185 892,140 915,100 928,92 940,130 957,157 972,125 990,92 1010,95 1028,115 1040,98 1065,88',
      ma10: '199,118 225,155 265,172 290,135 320,95 335,92 355,112 375,105 400,112 438,120 465,150 500,172 530,160 560,148 590,108 625,90 645,125 660,130 690,102 720,98 740,132 770,132 795,162 840,180 882,186 900,155 930,108 962,145 985,115 1010,98 1035,105 1065,90'
    }
  },
  m1: {
    type: 'macd', dx: -20, dy: -72, zero: 424,
    bars: '246,512 252,480 262,470 274,455 284,432 290,424 298,408 304,406 312,420 320,430 332,455 342,460 350,440 358,420 366,395 376,382 388,370 398,352 410,347 422,360 436,380 446,380 456,365 468,362 480,375 490,400 504,424 520,432 545,445 562,462 580,458 600,450 622,468 634,465 644,424 652,400 664,382 676,378 686,350 700,333 712,365 724,388 738,402 748,380 758,352 770,372 782,412 796,420 808,410 822,400 832,420 838,440 850,468 868,490 884,507 896,475 906,424 914,395 922,385 936,405 952,415 962,430 978,460 1000,452 1024,435 1030,415 1040,375 1050,362 1062,375 1074,402 1084,424 1092,432 1102,450 1112,468',
    lines: {
      ma5: '246,520 262,518 274,525 290,500 305,493 318,500 335,520 348,532 360,510 372,480 388,460 400,430 415,412 440,403 458,370 475,352 495,360 515,375 540,385 560,405 580,422 605,430 618,450 632,463 645,445 665,410 685,370 702,328 735,328 748,305 765,275 798,290 825,268 845,310 865,350 880,380 892,388 905,370 920,328 950,332 970,345 985,370 1020,378 1035,355 1050,315 1062,312 1078,325 1095,335 1112,368',
      ma10: '246,480 262,498 285,505 320,502 345,512 360,520 385,500 405,462 440,420 470,385 500,366 530,372 560,385 590,410 615,430 635,445 660,440 680,415 700,375 720,350 745,335 775,295 800,290 825,280 840,285 865,320 900,360 920,345 955,338 985,355 1015,370 1030,370 1050,345 1075,330 1095,332 1112,345'
    }
  },
  m2: {
    type: 'macd', dx: -3, dy: -72, zero: 391,
    bars: '197,310 203,310 209,345 217,372 227,380 239,365 251,375 263,368 275,350 287,368 299,380 317,375 329,358 341,348 353,360 365,388 380,400 400,402 412,430 425,445 438,455 448,497 460,470 470,438 480,420 500,410 516,395 526,420 532,458 542,430 554,392 562,355 572,320 580,282 586,268 600,275 612,295 630,310 645,325 655,345 668,355 690,355 700,375 708,391 740,400 755,425 768,445 795,448 815,430 835,400 845,388 860,382 870,388 880,391 895,402 905,385 925,365 945,350 965,352 980,378 1000,375 1015,388 1030,388 1038,378 1048,382 1058,391',
    lines: {
      ma5: '195,418 202,403 212,420 225,424 240,412 255,410 270,385 295,385 320,375 335,345 350,342 365,358 390,365 405,378 425,400 440,440 452,485 468,495 485,482 500,490 515,482 522,490 530,532 550,532 560,500 572,465 585,400 605,370 635,318 648,300 670,298 690,283 710,295 745,300 765,335 785,365 805,388 825,390 845,375 880,374 900,382 920,378 940,350 965,323 985,330 1010,323 1040,322 1050,317 1061,325',
      ma10: '195,458 205,440 230,428 265,415 295,395 330,375 350,355 390,357 420,375 445,410 470,462 500,480 520,480 540,505 555,515 575,490 600,430 630,375 660,328 700,296 745,298 775,320 800,355 820,378 850,378 880,376 910,382 940,368 980,335 1010,328 1061,322'
    }
  },
  m3: {
    type: 'macd', dx: -4, dy: -72, zero: 344,
    bars: '201,350 209,368 220,378 235,388 255,388 268,375 280,360 292,344 305,332 322,323 340,328 352,338 366,327 380,338 400,338 430,340 448,345 460,365 472,382 495,386 515,382 530,370 545,350 556,340 572,325 590,312 605,308 625,315 640,335 660,343 680,338 700,333 725,338 740,350 755,352 775,346 790,375 800,430 812,432 825,425 838,430 850,448 862,430 875,400 890,370 900,344 912,325 925,300 935,310 945,325 955,344 962,335 972,300 985,275 998,267 1010,282 1028,295 1045,290 1065,288',
    lines: {
      ma5: '199,325 210,335 230,365 262,388 285,382 305,365 325,352 350,352 370,343 400,343 430,337 450,345 465,375 490,398 520,413 550,403 575,385 600,360 620,347 655,353 690,342 715,335 745,345 775,350 790,375 800,410 815,440 830,470 840,500 855,525 870,533 885,532 900,510 912,498 930,473 950,475 960,487 975,460 985,430 1000,403 1025,385 1045,355 1065,333',
      ma10: '199,322 225,340 250,365 280,378 310,372 350,355 400,346 450,342 475,355 500,378 530,400 560,405 590,392 620,370 660,355 700,345 780,350 810,385 840,440 870,500 900,515 925,495 960,485 990,455 1020,410 1065,360'
    }
  },
  t1: { type: 'dates', unit: '1分', dates: [['0106', 62]] },
  t2: { type: 'dates', unit: '3分', dates: [['0105', 62], ['06', 199]] },
  t3: { type: 'dates', unit: '15分', dates: [['1223', 63], ['29', 155], ['0104', 246], ['06', 315]] },
  b1: { type: 'price', dx: 0, dy: 0, marks: [['12.79', 885, 69, 0, 0]] },
  b2: { type: 'price', dx: 0, dy: 0, scale: [['13.2', 21]], marks: [['13.18', 270, 69, 0, 0]] },
  b3: { type: 'price', dx: 0, dy: 0, marks: [['12188.48', 225, 69, 0, 0]] }
};

const AXIS_X = 61;

function parse(str) {
  return str.split(' ').map(p => p.split(',').map(Number));
}

function line(cls, x1, y1, x2, y2) {
  return `<line class="${cls}" x1="${x1}" y1="${y1}" x2="${x2}" y2="${y2}"/>`;
}

// value of column `col` at x, between the two nearest points
function valueAt(points, x, col) {
  for (let i = 1; i < points.length; i++) {
    if (x <= points[i][0]) {
      const a = points[i - 1];
      const b = points[i];
      return a[col] + (b[col] - a[col]) * (x - a[0]) / (b[0] - a[0]);
    }
  }
  return points[points.length - 1][col];
}

function drawCandles(c) {
  const pts = parse(c.candles);
  let html = '';
  for (let x = pts[0][0]; x <= pts[pts.length - 1][0]; x += 6) {
    if (c.gap && x >= c.gap[0] && x <= c.gap[1]) {
      html += line('ma5', x / 3 + c.dx, 201.5, x / 3 + c.dx + 1, 201.5);
      continue;
    }
    const before = valueAt(pts, Math.max(x - 3, pts[0][0]), 1) + valueAt(pts, Math.max(x - 3, pts[0][0]), 2);
    const after = valueAt(pts, x + 3, 1) + valueAt(pts, x + 3, 2);
    const px = Math.round(x / 3 + c.dx) + 0.5;
    html += line(after > before ? 'fall' : 'rise', px, valueAt(pts, x, 1) / 3 + c.dy, px, valueAt(pts, x, 2) / 3 + c.dy);
  }
  return html;
}

function drawBars(c) {
  const pts = parse(c.bars);
  const zero = Math.round(c.zero / 3 + c.dy);
  let html = '';
  for (let x = pts[0][0]; x <= pts[pts.length - 1][0]; x += 6) {
    const y = valueAt(pts, x, 1);
    const px = Math.round(x / 3 + c.dx) + 0.5;
    html += line(y > c.zero ? 'fall' : 'rise', px, zero, px, Math.round(y / 3 + c.dy));
  }
  return html;
}

function drawLines(c) {
  let html = '';
  for (const cls in c.lines) {
    const d = parse(c.lines[cls]).map(p => (p[0] / 3 + c.dx).toFixed(1) + ' ' + (p[1] / 3 + c.dy).toFixed(1));
    html += `<path class="${cls}" d="M${d.join('L')}"/>`;
  }
  return html;
}

function drawMark(c, [text, x, y, from, to]) {
  const ty = Math.round(y / 3 + c.dy);
  let html = `<text class="mark" x="${Math.round(x / 3 + c.dx)}" y="${ty + 5}">${text}</text>`;
  if (from !== to) {
    const a = Math.round(from / 3 + c.dx);
    const b = Math.round(to / 3 + c.dx);
    const back = b > a ? -3 : 3;
    html += `<path class="pointer" d="M${a} ${ty + 0.5}H${b}M${b + back} ${ty - 2.5}L${b} ${ty + 0.5}L${b + back} ${ty + 3.5}"/>`;
  }
  return html;
}

function draw(c) {
  let html = line('axis', AXIS_X + 0.5, 0, AXIS_X + 0.5, '100%');

  if (c.type === 'dates') {
    html += `<text class="unit" x="57" y="12">${c.unit}</text>`;
    c.dates.forEach(d => html += `<text class="date" x="${d[1]}" y="11">${d[0]}</text>`);
    return html;
  }

  (c.grid || []).forEach(y => html += line('grid', AXIS_X + 2, y + 0.5, '100%', y + 0.5));
  if (c.day) html += line('day-line', c.day + 0.5, 17, c.day + 0.5, '100%');
  if (c.type === 'kdj') c.scale.forEach(s => html += line('grid', AXIS_X + 2, s[1] + 0.5, '100%', s[1] + 0.5));
  if (c.type === 'macd') {
    const zero = Math.round(c.zero / 3 + c.dy);
    html += line('grid', AXIS_X + 2, zero + 0.5, '100%', zero + 0.5);
    html += `<rect class="focus" x="1" y="1" width="${AXIS_X - 1}" height="106"/>`;
    html += `<text class="scale" x="57" y="${zero + 5}">0</text>`;
    html += drawBars(c);
  }
  (c.scale || []).forEach(s => html += `<text class="scale" x="57" y="${s[1] + 5}">${s[0]}</text>`);
  if (c.candles) html += drawCandles(c);
  html += drawLines(c);
  (c.marks || []).forEach(m => html += drawMark(c, m));
  return html;
}

document.querySelectorAll('svg[data-chart]').forEach(svg => {
  svg.innerHTML = draw(charts[svg.dataset.chart]);
});

// window buttons at the right end of each title
const toolIcons = {
  '上一个': '<path d="M3 7l4-4v2.500h6v3h-6v2.500z"/>',
  '下一个': '<path d="M13 7l-4-4v2.500h-6v3h6v2.500z"/>',
  '分栏': '<path d="M1 9.500h9.500M10.500 1v12M13 3.500h2M13 6.500h2M13 9.500h2"/>',
  '最大化': '<path d="M3.500 3.500h9v7h-9z" stroke-width="2"/>'
};

document.querySelectorAll('.tools').forEach(el => {
  for (const name in toolIcons) {
    el.innerHTML += `<button aria-label="${name}"><svg width="16" height="14" fill="none" stroke="#7cb0ec"><rect x="0.5" y="0.5" width="15" height="13"/>${toolIcons[name]}</svg></button>`;
  }
});
```
